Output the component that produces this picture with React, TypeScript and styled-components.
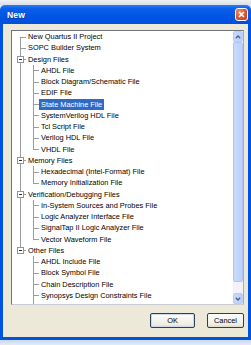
import React from "react";
import styled, { createGlobalStyle, css } from "styled-components";

const GlobalStyle = createGlobalStyle`
  html, body { margin: 0; padding: 0; }
  body {
    width: 251px;
    height: 345px;
    overflow: hidden;
    background: #dce6f7;
    font-family: "Liberation Sans", Arial, sans-serif;
  }
  * { box-sizing: border-box; }
`;

type GuideKind = "first" | "tee" | "end" | "pass" | "blank";

interface TreeNode {
  label: string;
  selected?: boolean;
  children?: TreeNode[];
}

const tree: TreeNode[] = [
  { label: "New Quartus II Project" },
  { label: "SOPC Builder System" },
  {
    label: "Design Files",
    children: [
      { label: "AHDL File" },
      { label: "Block Diagram/Schematic File" },
      { label: "EDIF File" },
      { label: "State Machine File", selected: true },
      { label: "SystemVerilog HDL File" },
      { label: "Tcl Script File" },
      { label: "Verilog HDL File" },
      { label: "VHDL File" },
    ],
  },
  {
    label: "Memory Files",
    children: [
      { label: "Hexadecimal (Intel-Format) File" },
      { label: "Memory Initialization File" },
    ],
  },
  {
    label: "Verification/Debugging Files",
    children: [
      { label: "In-System Sources and Probes File" },
      { label: "Logic Analyzer Interface File" },
      { label: "SignalTap II Logic Analyzer File" },
      { label: "Vector Waveform File" },
    ],
  },
  {
    label: "Other Files",
    children: [
      { label: "AHDL Include File" },
      { label: "Block Symbol File" },
      { label: "Chain Description File" },
      { label: "Synopsys Design Constraints File" },
      { label: "Text File" },
    ],
  },
];

interface FlatRow {
  label: string;
  selected: boolean;
  guides: GuideKind[];
  expandable: boolean;
}

function flatten(nodes: TreeNode[]): FlatRow[] {
  const rows: FlatRow[] = [];
  nodes.forEach((n, i) => {
    const isLast = i === nodes.length - 1;
    const kind: GuideKind = i === 0 ? "first" : isLast ? "end" : "tee";
    rows.push({
      label: n.label,
      selected: !!n.selected,
      guides: [kind],
      expandable: !!n.children,
    });
    n.children?.forEach((c, j) => {
      const lastChild = j === n.children!.length - 1;
      rows.push({
        label: c.label,
        selected: !!c.selected,
        guides: [isLast ? "blank" : "pass", lastChild ? "end" : "tee"],
        expandable: false,
      });
    });
  });
  return rows;
}

const rows = flatten(tree);

/* ---------- page frame ---------- */

const Screen = styled.div`
  width: 251px;
  height: 345px;
  display: flex;
  flex-direction: column;
`;

const BackdropTop = styled.div`
  height: 5px;
  background: linear-gradient(#eef0f4, #d9dee8);
`;

const BackdropBottom = styled.div`
  height: 5px;
  background: linear-gradient(#c9d7f1, #e4ebf8);
`;

const Window = styled.div`
  height: 335px;
  display: flex;
  flex-direction: column;
`;

const TitleBar = styled.div`
  height: 19px;
  display: flex;
  align-items: center;
  justify-content: space-between;
  padding: 0 3px 0 7px;
  background: linear-gradient(
    #2b7cf6 0%,
    #0a5ee8 20%,
    #0055e5 60%,
    #0050db 100%
  );
  border-radius: 5px 5px 0 0;
`;

const Title = styled.span`
  color: #fff;
  font-weight: bold;
  font-size: 8.6px;
  letter-spacing: 0.1px;
  text-shadow: 1px 1px 0 #0b3ca8;
`;

const CloseButton = styled.div`
  width: 13px;
  height: 13px;
  border: 1px solid #fff;
  border-radius: 3px;
  background: radial-gradient(circle at 35% 30%, #f0936f 0%, #e05a33 45%, #c23d1a 100%);
  display: flex;
  align-items: center;
  justify-content: center;
`;

const Frame = styled.div`
  flex: 1;
  display: flex;
  flex-direction: column;
  padding: 0 3px 3px 3px;
  background: #0052e0;
`;

const DialogBody = styled.div`
  flex: 1;
  display: flex;
  flex-direction: column;
  background: #ece9d8;
  padding: 6px 4px 0 8px;
`;

/* ---------- tree view ---------- */

const TreeBox = styled.div`
  height: 275px;
  display: flex;
  border: 1px solid #6f7680;
  border-right-color: #a8aeb8;
  border-bottom-color: #c9ccd2;
  background: #fff;
`;

const TreeList = styled.div`
  flex: 1;
  overflow: hidden;
  padding-left: 1px;
`;

const Row = styled.div`
  height: 11.26px;
  display: flex;
  align-items: stretch;
`;

const lineColor = "#9c9c9c";

const Guide = styled.div<{ $kind: GuideKind }>`
  position: relative;
  width: 13px;
  flex: none;

  ${({ $kind }) =>
    $kind !== "blank" &&
    css`
      &::before {
        content: "";
        position: absolute;
        left: 7px;
        width: 1px;
        background: ${lineColor};
        top: ${$kind === "first" ? "50%" : "0"};
        bottom: ${$kind === "end" ? "50%" : "0"};
      }
    `}

  ${({ $kind }) =>
    ($kind === "first" || $kind === "tee" || $kind === "end") &&
    css`
      &::after {
        content: "";
        position: absolute;
        left: 7px;
        right: 0;
        top: 50%;
        height: 1px;
        background: ${lineColor};
      }
    `}
`;

const Expander = styled.div`
  position: absolute;
  z-index: 1;
  left: 4px;
  top: 50%;
  margin-top: -3.5px;
  width: 7px;
  height: 7px;
  border: 1px solid #8d949c;
  background: #fff;
  display: flex;
  align-items: center;
  justify-content: center;

  &::before {
    content: "";
    width: 3px;
    height: 1px;
    background: #2a2a2a;
  }
`;

const Label = styled.span<{ $selected: boolean }>`
  align-self: center;
  height: 11px;
  line-height: 11px;
  padding: 0 2px;
  font-size: 7.4px;
  white-space: nowrap;
  color: ${({ $selected }) => ($selected ? "#fff" : "#000")};
  background: ${({ $selected }) => ($selected ? "#316ac5" : "transparent")};
`;

/* ---------- scroll bar ---------- */

const ScrollBar = styled.div`
  width: 10px;
  flex: none;
  display: flex;
  flex-direction: column;
  background: #f3f4f8;
`;

const ScrollArrow = styled.div`
  height: 11px;
  flex: none;
  display: flex;
  align-items: center;
  justify-content: center;
  background: linear-gradient(90deg, #c9d8fc, #bccffa);
  border: 1px solid #b9cdf7;
  border-radius: 2px;
`;

const Thumb = styled.div`
  height: 240px;
  flex: none;
  background: linear-gradient(90deg, #cad9fd, #bdd0fb);
  border: 1px solid #aec5f6;
  border-radius: 2px;
`;

const Track = styled.div`
  flex: 1;
  background: #f1f3f9;
`;

/* ---------- buttons ---------- */

const ButtonRow = styled.div`
  display: flex;
  justify-content: flex-end;
  gap: 12px;
  margin-top: 8px;
`;

const PushButton = styled.button<{ $width: number; $default?: boolean }>`
  width: ${({ $width }) => $width}px;
  height: 15px;
  padding: 0;
  border: 1px solid #2b3f5e;
  border-radius: 2px;
  background: linear-gradient(#fdfdfb, #efede4 80%, #dcd8cc);
  font-family: "Liberation Sans", Arial, sans-serif;
  font-size: 7.4px;
  color: #000;
  ${({ $default }) =>
    $default &&
    css`
      box-shadow: inset 0 0 0 1px #cfd9ea;
    `}
`;

const Chevron: React.FC<{ up?: boolean }> = ({ up }) => (
  <svg width="6" height="4" viewBox="0 0 6 4">
    <path
      d={up ? "M0.8 3.3 L3 1 L5.2 3.3" : "M0.8 0.7 L3 3 L5.2 0.7"}
      fill="none"
      stroke="#4d6185"
      strokeWidth="1.3"
    />
  </svg>
);

export default function App() {
  return (
    <>
      <GlobalStyle />
      <Screen>
        <BackdropTop />
        <Window>
          <TitleBar>
            <Title>New</Title>
            <CloseButton>
              <svg width="7" height="7" viewBox="0 0 7 7">
                <path d="M1 1 L6 6 M6 1 L1 6" stroke="#fff" strokeWidth="1.5" />
              </svg>
            </CloseButton>
          </TitleBar>
          <Frame>
            <DialogBody>
              <TreeBox>
                <TreeList>
                  {rows.map((r, i) => (
                    <Row key={i}>
                      {r.guides.map((g, k) => (
                        <Guide key={k} $kind={g}>
                          {r.expandable && k === r.guides.length - 1 && <Expander />}
                        </Guide>
                      ))}
                      <Label $selected={r.selected}>{r.label}</Label>
                    </Row>
                  ))}
                </TreeList>
                <ScrollBar>
                  <ScrollArrow>
                    <Chevron up />
                  </ScrollArrow>
                  <Thumb />
                  <Track />
                  <ScrollArrow>
                    <Chevron />
                  </ScrollArrow>
                </ScrollBar>
              </TreeBox>
              <ButtonRow>
                <PushButton $width={45} $default>
                  OK
                </PushButton>
                <PushButton $width={37}>Cancel</PushButton>
              </ButtonRow>
            </DialogBody>
          </Frame>
        </Window>
        <BackdropBottom />
      </Screen>
    </>
  );
}
